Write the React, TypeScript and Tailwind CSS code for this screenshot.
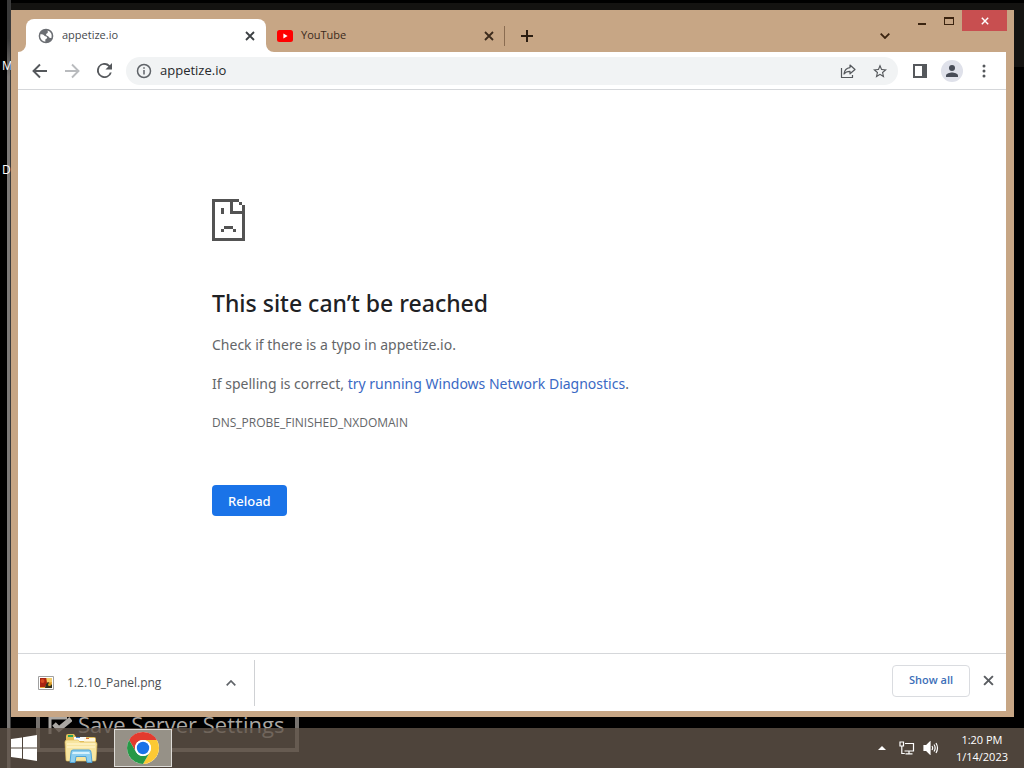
import { useState } from 'react';
import type { ReactNode } from 'react';

type IconProps = { className?: string };

function Globe({ className }: IconProps) {
  return (
    <svg viewBox="0 0 24 24" className={className} fill="currentColor" aria-hidden="true">
      <path d="M12 1a11 11 0 1 0 0 22 11 11 0 0 0 0-22zM11 20.500A8.600 8.600 0 0 1 3.600 9.500C6 9 8 9.500 9 11c1.200 1.800 3.200 1.200 4.300 2.400 1.200 1.300-.3 2.600-1.500 3.100-1 .5-.8 2-.8 4zM20.300 14.500c-1.600 1.200-3.300.5-4.100-1-.9-1.700-2.500-1.400-3.600-2.500-1.300-1.400.2-2.700 1.300-3.200 1.100-.6 1-2 .4-4.100A8.600 8.600 0 0 1 20.300 14.500z" />
    </svg>
  );
}

function Cross({ className }: IconProps) {
  return (
    <svg viewBox="0 0 10 10" className={className} fill="none" stroke="currentColor" strokeWidth="1.800" aria-hidden="true">
      <path d="M1 1l8 8M9 1l-8 8" />
    </svg>
  );
}

function YouTubeLogo() {
  return (
    <svg viewBox="0 0 16 12" className="h-3 w-4 shrink-0" aria-hidden="true">
      <rect width="16" height="12" rx="2.500" fill="#f00" />
      <path d="M6.400 3.500v5l4.200-2.500z" fill="#fff" />
    </svg>
  );
}

function SadPage() {
  return (
    <svg viewBox="0 0 11 14" className="h-[42px] w-[33px]" fill="#535353" shapeRendering="crispEdges" aria-hidden="true">
      <path d="M0 0h9v1H7v3h3V2h1v12H0zM1 1v12h9V5H6V1z" fillRule="evenodd" />
      <path d="M9 1h1v1H9zM3 3h1v2H3zM4 9h3v1H4zM3 10h1v1H3zM7 10h1v1H7z" />
    </svg>
  );
}

function ChromeLogo() {
  return (
    <svg viewBox="0 0 48 48" className="size-8" aria-hidden="true">
      <circle cx="24" cy="24" r="24" fill="#fff" />
      <path d="M24 12h20.780a24 24 0 0 0-41.570.003L13.610 30A12 12 0 0 1 24 12z" fill="#e33b2e" />
      <path d="M34.390 30L24 48A24 24 0 0 0 44.780 12H24a12 12 0 0 1 10.390 18z" fill="#fcc934" />
      <path d="M13.610 30L3.210 12.010A24 24 0 0 0 24 48l10.390-18a12 12 0 0 1-20.780 0z" fill="#279847" />
      <circle cx="24" cy="24" r="12" fill="#fff" />
      <circle cx="24" cy="24" r="9.300" fill="#1a73e8" />
    </svg>
  );
}

function FolderLogo() {
  return (
    <svg viewBox="0 0 34 30" className="h-[30px] w-[34px]" aria-hidden="true">
      <path d="M2 3q0-2 2-2h6l2 3h18q2 0 2 2v21H2z" fill="#e3bf58" />
      <rect x="4" y="2" width="5" height="2" fill="#29a35a" />
      <path d="M10 4h12v4H10z" fill="#f7fbff" />
      <path d="M12 4h4v1h-4z" fill="#4386cf" />
      <path d="M20 5h11v4H20z" fill="#fff7dc" />
      <path d="M22 5h3v1h-3z" fill="#d36b3b" />
      <path d="M1 9q0-2 2-2h11l2 2h15q2 0 2 2l-1 16q0 1-1 1H3q-1 0-1-1z" fill="#f7e5a0" stroke="#dfbb5c" strokeWidth=".7" />
      <path d="M3 11h28M3 14h28" stroke="#fff2c3" strokeWidth="1.500" />
      <path d="M6 29.500l1-10q0-2.500 2-2.500h16q2 0 2 2.500l1 10h-5l-1-6H12l-1 6z" fill="#8ecff0" stroke="#4fa3d6" />
      <path d="M9 19h16l1 2H8z" fill="#d6f1fc" />
    </svg>
  );
}

function PictureFile() {
  return (
    <svg viewBox="0 0 16 14" className="h-[14px] w-4" aria-hidden="true">
      <path d="M.5.500h15v13H.5z" fill="#fff" stroke="#a0a0a0" />
      <path d="M2 2h12v10H2z" fill="#e8a83d" />
      <path d="M2 2h6l1 5-2 4H2z" fill="#a92412" />
      <circle cx="4.500" cy="5" r="2" fill="#d94a22" />
      <path d="M9 2h5v4H9z" fill="#f3cb69" />
      <path d="M8 8l2-2 4 3v3H7z" fill="#34301c" />
      <circle cx="11.500" cy="8.500" r="1.500" fill="#dca521" />
    </svg>
  );
}

function ToolButton({ label, children }: { label: string; children: ReactNode }) {
  return (
    <button type="button" aria-label={label} className="flex size-8 shrink-0 items-center justify-center text-[#55585c]">
      {children}
    </button>
  );
}

function TabStrip() {
  return (
    <header className="flex h-[42px] items-end text-[11px] text-[#3b2a1c]">
      <div className="flex flex-1 items-end pl-2">
        <div className="relative flex h-[33px] w-60 items-center rounded-t-lg bg-white pr-[11px] pl-3 text-[#45494d]">
          <svg viewBox="0 0 8 8" className="absolute bottom-0 -left-2 size-2" fill="#fff" aria-hidden="true">
            <path d="M8 0v8H0a8 8 0 0 0 8-8z" />
          </svg>
          <svg viewBox="0 0 8 8" className="absolute -right-2 bottom-0 size-2" fill="#fff" aria-hidden="true">
            <path d="M0 0v8h8a8 8 0 0 1-8-8z" />
          </svg>
          <Globe className="size-4 text-[#6b6e73]" />
          <span className="ml-2 flex-1">appetize.io</span>
          <button type="button" aria-label="Close appetize.io" className="text-[#3c4043]">
            <Cross className="size-[10px]" />
          </button>
        </div>
        <div className="flex h-[33px] w-[238px] items-center pr-[10px] pl-[11px]">
          <YouTubeLogo />
          <span className="ml-2 flex-1">YouTube</span>
          <button type="button" aria-label="Close YouTube">
            <Cross className="size-[10px]" />
          </button>
        </div>
        <div className="mb-[6px] h-5 w-px bg-[#8a6c51]" />
        <button type="button" aria-label="New tab" className="flex h-[33px] w-11 items-center justify-center">
          <svg viewBox="0 0 12 12" className="size-3" stroke="#2b1d11" strokeWidth="2" aria-hidden="true">
            <path d="M6 0v12M0 6h12" />
          </svg>
        </button>
      </div>
      <button type="button" aria-label="Search tabs" className="flex h-[33px] w-6 items-center justify-center">
        <svg viewBox="0 0 10 6" className="h-[6px] w-[10px]" fill="none" stroke="#3b2410" strokeWidth="1.800" aria-hidden="true">
          <path d="M.7.700L5 5 9.300.700" />
        </svg>
      </button>
      <div className="ml-3 -mr-px flex items-start self-start">
        <button type="button" aria-label="Minimize" className="flex h-[21px] w-[26px] items-center justify-center">
          <svg viewBox="0 0 9 9" className="size-[9px]" fill="#3b2410" aria-hidden="true">
            <path d="M0 7h8v2H0z" />
          </svg>
        </button>
        <button type="button" aria-label="Maximize" className="flex h-[21px] w-[27px] items-center justify-center">
          <svg viewBox="0 0 10 8" className="h-2 w-[10px]" fill="#3b2410" fillRule="evenodd" aria-hidden="true">
            <path d="M0 0h10v8H0zM1 2v5h8V2z" />
          </svg>
        </button>
        <button type="button" aria-label="Close" className="flex h-[21px] w-[45px] items-center justify-center bg-[#c84f50] text-white">
          <Cross className="size-2" />
        </button>
      </div>
    </header>
  );
}

function Toolbar() {
  const [address, setAddress] = useState('appetize.io');
  return (
    <div className="flex h-[38px] items-center border-b border-[#d5d7da] bg-white px-[6px]">
      <ToolButton label="Back">
        <svg viewBox="0 0 16 16" className="size-4" fill="none" stroke="currentColor" strokeWidth="1.900" aria-hidden="true">
          <path d="M15 8H2M8 1.500L1.500 8 8 14.500" />
        </svg>
      </ToolButton>
      <ToolButton label="Forward">
        <svg viewBox="0 0 16 16" className="size-4" fill="none" stroke="#b9bbbe" strokeWidth="1.900" aria-hidden="true">
          <path d="M1 8h13M8 1.500L14.500 8 8 14.500" />
        </svg>
      </ToolButton>
      <ToolButton label="Reload page">
        <svg viewBox="4 4 16 16" className="size-[15px]" fill="currentColor" aria-hidden="true">
          <path d="M17.650 6.350A8 8 0 1 0 19.730 14h-2.080A6 6 0 1 1 12 6c1.660 0 3.140.69 4.220 1.780L13 11h7V4z" />
        </svg>
      </ToolButton>
      <div className="ml-[6px] flex h-7 min-w-0 flex-1 items-center rounded-full bg-[#f1f3f4] pr-[2px] pl-[10px]">
        <svg viewBox="0 0 16 16" className="size-4 shrink-0" fill="none" stroke="#5f6368" strokeWidth="1.500" aria-hidden="true">
          <circle cx="8" cy="8" r="6.500" />
          <path d="M8 7v4.500M8 4.200v1.600" />
        </svg>
        <input
          aria-label="Address"
          value={address}
          onChange={(event) => setAddress(event.target.value)}
          className="ml-2 min-w-0 flex-1 bg-transparent text-[13px] text-[#26282b] outline-none"
        />
        <ToolButton label="Share">
          <svg viewBox="0 0 16 16" className="size-4" fill="none" stroke="currentColor" strokeWidth="1.200" strokeLinejoin="round" aria-hidden="true">
            <path d="M1.500 5v9.500h11V12" />
            <path d="M10 2l5 4.500-5 4.300V8.300c-3 0-4.700.9-6 2.700.4-3.300 2.300-6 6-6.400z" />
          </svg>
        </ToolButton>
        <ToolButton label="Bookmark this tab">
          <svg viewBox="2 2 20 19" className="size-[14px]" fill="currentColor" aria-hidden="true">
            <path d="M22 9.240l-7.190-.62L12 2 9.190 8.630 2 9.240l5.460 4.730L5.820 21 12 17.270 18.180 21l-1.630-7.030zM12 15.400l-3.760 2.270 1-4.280-3.320-2.880 4.380-.38L12 6.100l1.710 4.040 4.380.38-3.320 2.880 1 4.280z" />
          </svg>
        </ToolButton>
      </div>
      <div className="ml-[6px] flex">
        <ToolButton label="Side panel">
          <svg viewBox="0 0 14 14" className="size-[14px]" fill="currentColor" fillRule="evenodd" aria-hidden="true">
            <path d="M0 0h14v14H0zM2 2v10h7V2z" />
          </svg>
        </ToolButton>
        <ToolButton label="Profile">
          <svg viewBox="0 0 22 22" className="size-[22px]" aria-hidden="true">
            <circle cx="11" cy="11" r="11" fill="#dfe1ea" />
            <circle cx="11" cy="8" r="3" fill="#474c57" />
            <path d="M5 17v-1.500c0-2 4-3 6-3s6 1 6 3V17z" fill="#474c57" />
          </svg>
        </ToolButton>
        <ToolButton label="Menu">
          <svg viewBox="0 0 4 14" className="h-[14px] w-1" fill="currentColor" aria-hidden="true">
            <circle cx="2" cy="2" r="1.500" />
            <circle cx="2" cy="7" r="1.500" />
            <circle cx="2" cy="12" r="1.500" />
          </svg>
        </ToolButton>
      </div>
    </div>
  );
}

function ErrorPage() {
  return (
    <main className="flex flex-1 flex-col items-start bg-white px-[194px] pt-[109px] font-['Noto_Sans','Open_Sans',sans-serif] text-[14px] leading-5 text-[#646669]">
      <SadPage />
      <h1 className="mt-12 text-[23px] leading-7 font-medium text-[#202124]">This site can’t be reached</h1>
      <p className="mt-[18px]">Check if there is a typo in appetize.io.</p>
      <p className="mt-[19px]">
        If spelling is correct,{' '}
        <a href="#diagnostics" className="text-[#3a69c4]">try running Windows Network Diagnostics</a>.
      </p>
      <p className="mt-[19px] font-['Open_Sans','Noto_Sans',sans-serif] text-[12px] leading-5">DNS_PROBE_FINISHED_NXDOMAIN</p>
      <button type="button" className="mt-[52px] h-[31px] rounded bg-[#1a73e8] px-4 text-[13px] font-medium text-white">
        Reload
      </button>
    </main>
  );
}

function DownloadShelf() {
  return (
    <footer className="flex h-[58px] items-center border-t border-[#d5d7da] bg-white pr-3 pl-5">
      <div className="flex h-[46px] w-[217px] items-center border-r border-[#cfd1d4] pr-[18px]">
        <PictureFile />
        <span className="ml-[13px] flex-1 text-[12px] text-[#4b4e52]">1.2.10_Panel.png</span>
        <button type="button" aria-label="Download options">
          <svg viewBox="0 0 10 6" className="h-[6px] w-[10px]" fill="none" stroke="#5f6368" strokeWidth="1.700" aria-hidden="true">
            <path d="M.7 5.300L5 1l4.300 4.300" />
          </svg>
        </button>
      </div>
      <div className="ml-auto flex items-center pb-1">
        <button type="button" className="h-8 w-[78px] rounded border border-[#dadce0] text-[11px] font-semibold text-[#3c6fb8]">
          Show all
        </button>
        <button type="button" aria-label="Close downloads bar" className="ml-[13px] text-[#5a5d61]">
          <Cross className="size-[11px]" />
        </button>
      </div>
    </footer>
  );
}

function Taskbar() {
  return (
    <nav aria-label="Taskbar" className="relative flex h-10 items-center bg-[#62554a]/80 pr-4 pl-[10px] text-white">
      <button type="button" aria-label="Start">
        <svg viewBox="0 0 28 26" className="h-[26px] w-7" fill="#fff" aria-hidden="true">
          <path d="M1 4l11-1.600V12.500H1zM13 2.200L27 0v12.500H13zM1 13.500h11v10.100L1 22zM13 13.500h14V26l-14-2.200z" />
        </svg>
      </button>
      <button type="button" aria-label="File Explorer" className="ml-[26px]">
        <FolderLogo />
      </button>
      <button type="button" aria-label="Google Chrome" className="ml-4 flex h-[38px] w-[58px] items-center justify-center border border-[#dedcd8] bg-[#969187]">
        <ChromeLogo />
      </button>
      <div className="ml-auto flex items-center">
        <button type="button" aria-label="Show hidden icons">
          <svg viewBox="0 0 8 4" className="h-1 w-2" fill="#fff" aria-hidden="true">
            <path d="M0 4l4-4 4 4z" />
          </svg>
        </button>
        <svg viewBox="0 0 16 14" className="ml-[13px] h-[14px] w-4" fill="none" stroke="#fff" strokeWidth="1.200" aria-hidden="true">
          <path d="M6 2.500h8.500v7.500H5.500M10 10v2.500M6.500 12.800h7" />
          <path d="M1 1h3.500v4H1zM2.800 5v7.500h3" />
        </svg>
        <svg viewBox="0 0 16 14" className="ml-2 h-[14px] w-4" fill="none" stroke="#fff" strokeWidth="1.200" aria-hidden="true">
          <path d="M1 4.500h2.500L7 1v12L3.500 9.500H1z" fill="#fff" />
          <path d="M9 5q1.300 2 0 4M11 3.500q2.300 3.500 0 7M13 2q3 5 0 10" />
        </svg>
        <time className="ml-[17px] text-center text-[11px] leading-[17px]">
          1:20 PM
          <br />
          1/14/2023
        </time>
      </div>
    </nav>
  );
}

export default function App() {
  return (
    <div className="relative flex min-h-screen flex-col overflow-hidden bg-black font-['Open_Sans','Noto_Sans',sans-serif]">
      <div className="absolute inset-x-0 top-[3px] h-16 bg-[#141311]" />
      <div className="absolute inset-y-0 left-0 w-[7px] bg-black" />
      <div className="absolute inset-y-0 left-[7px] w-1 border-r border-[#3c3c3c] bg-linear-to-b from-[#3a3a3a] from-5% to-[#7c7977] to-10%" />
      <span className="absolute top-[57px] left-[2px] text-[12px] text-white">M</span>
      <span className="absolute top-[161px] left-[2px] text-[12px] text-white">D</span>
      <div className="absolute bottom-4 left-9 flex h-12 w-[263px] items-start gap-[6px] border-4 border-[#77736f] pt-[6px] pl-2 text-[#aaa7a3]">
        <svg viewBox="0 0 24 22" className="h-[22px] w-6" fill="none" stroke="currentColor" aria-hidden="true">
          <path d="M2 20V4h17" strokeWidth="3" />
          <path d="M6 10l5 5L23 5" strokeWidth="5" />
        </svg>
        <span className="text-[22px] leading-5 whitespace-nowrap">Save Server Settings</span>
      </div>
      <div className="relative flex flex-1 flex-col pt-[10px] pr-[10px] pb-[11px] pl-[11px]">
        <section aria-label="Browser window" className="flex flex-1 flex-col bg-[#c7a685] pr-2 pb-[6px] pl-[7px]">
          <TabStrip />
          <Toolbar />
          <ErrorPage />
          <DownloadShelf />
        </section>
      </div>
      <Taskbar />
    </div>
  );
}
